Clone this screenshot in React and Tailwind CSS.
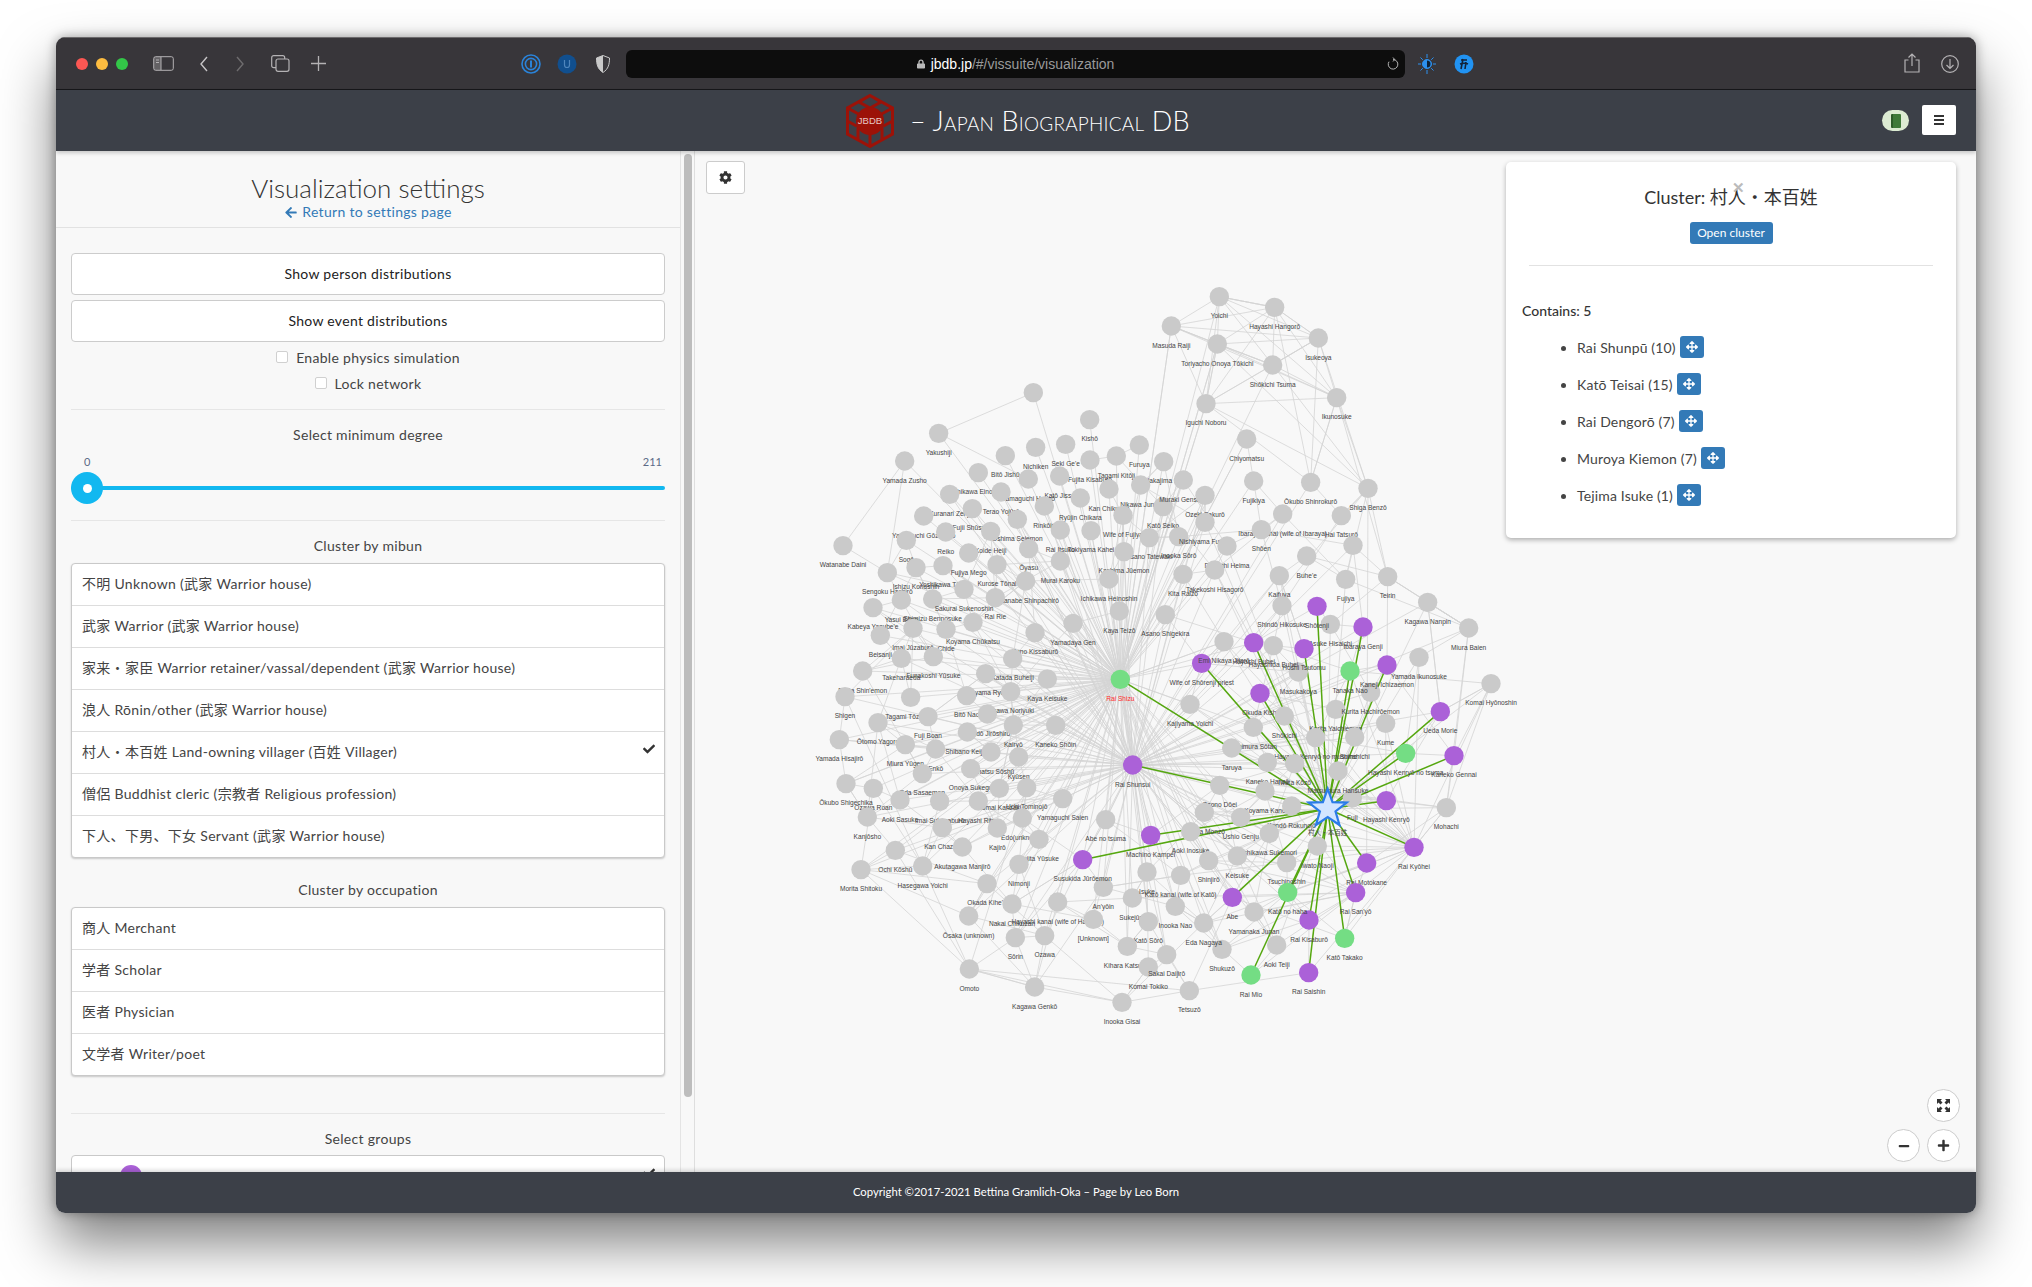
import { FaArrowLeft, FaArrowsAlt, FaCheck, FaCog, FaLock, FaMinus, FaPlus } from 'react-icons/fa'

const SANS = "font-['Lato','Noto_Sans_CJK_JP',sans-serif]"

// graph data, read off the picture in crops of 3x, [x, y, label, kind]
const fromCrop = (ox, oy, list) => list.map(([x, y, label, kind]) => ({ x: ox + x / 3, y: oy + y / 3, label, kind }))

const graphNodes = [
  ...fromCrop(800, 270, [
    [700, 368, ''], [869, 449, 'Kishō'], [416, 490, 'Yakushiji'], [314, 573, 'Yamada Zusho'], [616, 557, 'Bitō Jishū'],
    [707, 532, 'Nichiken'], [797, 523, "Seki Ge'e"], [870, 570, 'Fujita Kisaburō'], [949, 558, 'Tagami Kitōji'], [1018, 525, 'Furuya'],
    [1091, 575, 'Nakajima Eiji'], [535, 608, 'Ishikawa Einoshin'], [685, 627, 'Yamaguchi Hanzō'], [779, 618, 'Katō Jisso'], [603, 666, 'Terao Yojūrō'],
    [927, 657, 'Kan Chikuzan'], [1022, 645, 'Nikawa Junzō'], [449, 673, 'Kuranari Zenji'], [517, 716, 'Fujii Shūsuke'], [733, 708, 'Rinkōin'],
    [841, 684, 'Ryūjin Chikara'], [371, 738, 'Yamaguchi Gōzaburō'], [1089, 710, 'Katō Seiko'], [969, 736, 'Wife of Fujiya'], [652, 748, 'Ōshima Seiemon'],
    [437, 786, 'Reiko'], [572, 784, 'Koide Heiji'], [781, 780, 'Rai Itsuko'], [873, 782, 'Tokiyama Kahei'], [1048, 803, 'Asano Tatewaki'],
    [1136, 800, 'Inooka Sōrō'], [319, 811, 'Sogō'], [686, 836, 'Ōyasu'], [506, 849, 'Fujiya Mego'], [972, 845, 'Kashima Jūemon'],
    [348, 893, 'Ishizu Konoshin'], [429, 887, 'Yoshikawa Tōzō'], [591, 884, 'Kurose Tōnai'], [781, 873, 'Murai Karoku'], [1149, 913, 'Kita Raizō'],
    [262, 908, 'Sengoku Hachirō'], [677, 933, 'Watanabe Shinpachirō'], [927, 927, 'Ichikawa Heinoshin'], [304, 990, 'Yasui Bōan'], [398, 987, 'Shimizu Bennosuke'],
    [492, 958, 'Sakurai Sukenoshin'], [586, 983, 'Rai Rie'], [219, 1013, 'Kabeya Yasube\'e'], [958, 1023, 'Kaya Teizō'], [1096, 1034, 'Asano Shigekira'],
    [339, 1075, 'Imai Jūzaburō'], [438, 1078, 'Chide'], [519, 1057, 'Koyama Chūkatsu'], [819, 1060, 'Yamadaya Gen'], [705, 1088, 'Kuno Kissaburō'],
    [129, 827, 'Watanabe Daini'], [241, 1096, 'Beisanji'],
  ]),
  ...fromCrop(800, 660, [
    [304, -5, 'Takeharaeda'], [400, -10, 'Funakoshi Yūsuke'], [638, -4, 'Katada Buheiji'], [742, 57, 'Kaya Keisuke'], [188, 33, "Fujita Shin'emon"],
    [557, 41, 'Murayama Ryūzō'], [632, 95, 'Ogawa Noriyuki'], [135, 110, 'Shigen'], [332, 112, 'Tagami Tōzaburō'], [500, 107, 'Bitō Nao'],
    [562, 162, 'Kondō Jirōshirō'], [384, 170, 'Fuji Boan'], [234, 188, 'Ōtomo Yagoro'], [640, 195, 'Kairyō'], [502, 216, 'Shibano Keijirō'],
    [767, 196, 'Kaneko Shōin'], [118, 239, 'Yamada Hisajirō'], [316, 254, 'Miura Yūgen'], [407, 267, 'Enkō'], [573, 276, 'Komatsu Sōshū'],
    [656, 291, 'Kyūsen'], [512, 326, 'Onoya Sukego'], [367, 341, 'Eda Sasaemon'], [138, 371, 'Ōkubo Shigechika'], [220, 385, 'Ozawa Roan'],
    [598, 385, 'Komai Kanzaki'], [680, 383, 'Uchi Tominojō'], [300, 420, 'Aoki Sasuke'], [419, 424, 'Imai Sukesaburō'], [535, 423, 'Hayashi Ritsu'],
    [788, 416, 'Yamaguchi Saien'], [202, 471, 'Kanjōsho'], [427, 503, 'Kan Chazan'], [667, 474, 'Edo(unknown)'], [592, 504, 'Kajirō'],
    [487, 561, 'Akutagawa Manjirō'], [717, 538, 'Fujita Yūsuke'], [286, 571, 'Ochi Kōshū'], [368, 618, 'Hasegawa Yoichi'], [657, 613, 'Nimonji'],
    [183, 629, 'Morita Shitoku'], [561, 671, 'Okada Kihe\'e'], [917, 479, 'Abe no tsuma'], [636, 732, 'Nakai Chikuzan'], [773, 726, 'Hayashi kanai (wife of Hayashi)'],
    [506, 768, 'Ōsaka (unknown)'], [880, 778, '[Unknown]'], [646, 833, 'Sōrin'], [734, 827, 'Ozawa'], [508, 927, 'Omoto'],
    [704, 981, 'Kagawa Genkō'], [966, 1027, 'Inooka Gisai'], [910, 682, "An'yōin"], [997, 714, 'Sukejūrō'], [1041, 636, 'Isuke'],
    [1045, 785, 'Katō Sōrō'], [982, 859, 'Kihara Katsuma'], [1045, 921, 'Komai Tokiko'], [1100, 884, 'Sakai Daijirō'],
    [961, 58, 'Rai Shizu', 'g'], [998, 315, 'Rai Shunsui', 'p'], [1052, 526, 'Machino Kampei', 'p'], [848, 599, 'Susukida Jūrōemon', 'p'],
  ]),
  ...fromCrop(1150, 660, [
    [155, 10, 'Wife of Shōrenji priest', 'p'], [330, 100, 'Okuda Kishi', 'p'], [445, 36, 'Masukakoya'], [120, 133, 'Kajiyama Yoichi'], [403, 168, 'Shōkichi'],
    [310, 202, 'Sugimura Sōtan'], [557, 148, 'Kurita Yaichiemon'], [662, 97, 'Kurita Hachirōemon'], [600, 33, 'Tanaka Nao', 'g'], [711, 15, 'Kaneji Ichizaemon', 'p'],
    [807, -8, 'Yamada Ikunosuke'], [707, 190, 'Kume'], [614, 231, 'Shinshichi'], [497, 233, 'Hayashi Kenryō no musume'], [871, 155, 'Ueda Morie', 'p'],
    [1023, 71, 'Komai Hyōnoshin'], [912, 287, 'Kaneko Gennai', 'p'], [767, 280, 'Hayashi Kenryō no tsuma', 'g'], [709, 422, 'Hayashi Kenryō', 'p'], [889, 443, 'Mohachi'],
    [792, 562, 'Rai Kyōhei', 'p'], [650, 609, 'Rai Motokane', 'p'], [617, 698, "Rai San'yō", 'p'], [584, 835, 'Katō Takako', 'g'], [477, 780, 'Rai Kisaburō', 'p'],
    [476, 938, 'Rai Saishin', 'p'], [303, 945, 'Rai Mio', 'g'], [410, 608, 'Tsuchinoshin'], [413, 697, 'Katō no haha', 'g'], [247, 712, 'Abe', 'p'],
    [502, 558, 'Iwato Naoji'], [607, 414, 'Fuji'], [564, 333, 'Matsumura Hansuke'], [434, 311, 'Iwata Kōzō'], [352, 307, 'Kaneko Hanzō'],
    [245, 264, 'Taruya'], [209, 376, 'Osono Dōei'], [345, 393, 'Koyama Kanō'], [425, 438, 'Kondō Rokunojō'], [272, 472, 'Ushio Genju'],
    [163, 457, 'Okada Monzō'], [122, 515, 'Aoki Inosuke'], [358, 520, 'Ishikawa Sukemori'], [262, 588, 'Keisuke'], [176, 602, 'Shinjirō'],
    [92, 646, 'Katō kanai (wife of Katō)'], [312, 756, 'Yamanaka Junan'], [380, 855, 'Aoki Teiji'], [216, 868, 'Shukuzō'], [76, 739, 'Inooka Nao'],
    [161, 789, 'Eda Nagaya'], [118, 992, 'Tetsuzō'],
  ]),
  ...fromCrop(1100, 270, [
    [358, 80, 'Yoichi'], [524, 112, 'Hayashi Hangorō'], [214, 168, 'Masuda Raiji'], [352, 222, 'Toriyacho Onoya Tōkichi'], [655, 204, 'Isukeoya'],
    [518, 285, 'Shōkichi Tsuma'], [710, 383, 'Ikunosuke'], [318, 401, 'Iguchi Noboru'], [440, 507, 'Chiyomatsu'], [461, 633, 'Fujikiya'],
    [632, 637, 'Ōkubo Shinrokurō'], [804, 655, 'Shiga Benzō'], [548, 732, 'Ibaraya kanai (wife of Ibaraya)'], [724, 737, 'Hai Tatsurō'], [484, 779, 'Shōen'],
    [250, 630, 'Muraki Gensuke'], [315, 676, 'Ozeki Sakurō'], [315, 757, 'Nishiyama Fuyuki'], [381, 828, 'Debuchi Heima'], [620, 858, "Buhe'e"],
    [344, 900, 'Takekoshi Hisagorō'], [759, 826, ''], [538, 917, 'Kaifuya'], [737, 928, 'Fujiya'], [863, 920, 'Teirin'],
    [983, 997, 'Kagawa Nanpin'], [1106, 1074, 'Miura Baien'], [546, 1007, 'Shindō Hikosuke'], [691, 1063, 'Asuke Hisaichi'], [651, 1009, 'Shōtenji', 'p'],
    [789, 1071, 'Ibaraya Genji', 'p'], [372, 1115, 'Emi Nikaya Jitarō'], [520, 1127, 'Hayashida Buhei'], [461, 1118, 'Hayashi Buhei', 'p'], [612, 1136, 'Hoshi Tsutomu', 'p'],
  ]),
]

const STAR = { x: 1327.7, y: 808.8 }
const byName = name => graphNodes.find(n => n.label === name)

// small repeatable hash instead of Math.random, so the edges stay put between runs
const pick = (i, j, mod) => ((i * 7919 + j * 104729 + i * j * 31) >>> 0) % mod

function buildEdges() {
  const edges = []
  const shizu = byName('Rai Shizu')
  const shunsui = byName('Rai Shunsui')
  const kyohei = byName('Rai Kyōhei')
  const sanyo = byName("Rai San'yō")
  const add = (a, b) => a && b && edges.push([a, b])
  graphNodes.forEach((n, i) => {
    const outer = n.y > 960 || n.x < 870 && n.y > 880 || n.x < 860 && n.y < 560
    if (!outer && n !== shizu && (n.x < 1260 || pick(i, 1, 3) === 0)) add(shizu, n)
    if (!outer && n !== shunsui && n.y > 480 && pick(i, 2, 5) < 3) add(shunsui, n)
    if (n.x > 1180 && n.y > 520 && !n.kind && pick(i, 3, 5) < 3) edges.push([STAR, n])
    if (n.x > 1170 && n.y > 640 && n.y < 1000 && pick(i, 4, 5) < 2) add(kyohei, n)
    if (n.x > 1130 && n.y > 780 && pick(i, 5, 3) === 0) add(sanyo, n)
    // the upper left of the net only has its lines to the hubs
    if (n.y < 560 && n.x < 1100) return
    const near = graphNodes
      .filter(o => o !== n)
      .sort((a, b) => (a.x - n.x) ** 2 + (a.y - n.y) ** 2 - (b.x - n.x) ** 2 - (b.y - n.y) ** 2)
    add(n, near[pick(i, 6, 3)])
    if (n.y > 500) add(n, near[3 + pick(i, 7, 9)])
  })
  const top = ['Yoichi', 'Hayashi Hangorō', 'Masuda Raiji', 'Toriyacho Onoya Tōkichi', 'Isukeoya', 'Shōkichi Tsuma', 'Ikunosuke', 'Iguchi Noboru']
  top.forEach((a, i) => top.slice(i + 1).forEach(b => add(byName(a), byName(b))))
  const extra = [
    ['Masuda Raiji', 'Rai Shizu'], ['Iguchi Noboru', 'Rai Shizu'], ['Toriyacho Onoya Tōkichi', 'Rai Shizu'], ['Shōkichi Tsuma', 'Rai Shizu'], ['Chiyomatsu', 'Rai Shizu'],
    ['Ikunosuke', 'Shiga Benzō'], ['Ikunosuke', 'Ōkubo Shinrokurō'], ['Isukeoya', 'Shiga Benzō'], ['Isukeoya', 'Ōkubo Shinrokurō'], ['Hayashi Hangorō', 'Ōkubo Shinrokurō'],
    ['Toriyacho Onoya Tōkichi', 'Shiga Benzō'], ['Iguchi Noboru', 'Ōkubo Shinrokurō'], ['Iguchi Noboru', 'Shiga Benzō'], ['Shōkichi Tsuma', 'Shiga Benzō'], ['Ikunosuke', 'Teirin'],
    ['Shiga Benzō', 'Teirin'], ['Shiga Benzō', 'Fujiya'], ['Shiga Benzō', 'Rai Motokane'], ['Teirin', 'Miura Baien'], ['Kagawa Nanpin', 'Miura Baien'], ['Kagawa Nanpin', 'Ueda Morie'],
    ['Miura Baien', 'Kaneko Gennai'], ['Miura Baien', 'Mohachi'], ['Komai Hyōnoshin', 'Kaneko Gennai'], ['Komai Hyōnoshin', 'Ueda Morie'], ['Mohachi', 'Rai Kyōhei'],
    ['Yamada Zusho', 'Watanabe Daini'], ['Yamada Zusho', 'Sengoku Hachirō'], ['Yakushiji', 'Yamaguchi Hanzō'], ['Watanabe Daini', 'Sengoku Hachirō'],
    ['Omoto', 'Inooka Gisai'], ['Omoto', 'Kagawa Genkō'], ['Omoto', 'Tetsuzō'], ['Omoto', 'Sōrin'], ['Omoto', 'Hasegawa Yoichi'], ['Omoto', 'Uchi Tominojō'],
    ['Kagawa Genkō', 'Inooka Gisai'], ['Kagawa Genkō', 'Ozawa'], ['Inooka Gisai', 'Ozawa'], ['Inooka Gisai', 'Tetsuzō'], ['Inooka Gisai', 'Komai Tokiko'],
    ['Morita Shitoku', 'Omoto'], ['Morita Shitoku', 'Ochi Kōshū'], ['Morita Shitoku', 'Ōsaka (unknown)'], ['Shigen', 'Hasegawa Yoichi'], ['Ōsaka (unknown)', 'Ozawa'],
  ]
  extra.forEach(([a, b]) => add(byName(a), byName(b)))
  // the lone node at the top joins Yakushiji
  edges.push([graphNodes[0], byName('Yakushiji')])
  return edges
}

const grayEdges = buildEdges()
const greenEdges = graphNodes.filter(n => n.kind).map(n => [STAR, n])
const starPoints = Array.from({ length: 10 }, (_, i) => {
  const r = i % 2 ? 8.2 : 20
  const a = -Math.PI / 2 + (i * Math.PI) / 5
  return `${(STAR.x + r * Math.cos(a)).toFixed(1)},${(STAR.y + r * Math.sin(a)).toFixed(1)}`
}).join(' ')

const fills = { g: '#74dd84', p: '#ab61d8' }

function NetworkGraph() {
  return (
    <svg viewBox="695 151 1281 1021" className="absolute inset-0 w-full h-full">
      {grayEdges.map(([a, b], i) => (
        <line key={i} x1={a.x} y1={a.y} x2={b.x} y2={b.y} stroke="#d4d4d4" strokeWidth="0.8" />
      ))}
      {greenEdges.map(([a, b], i) => (
        <line key={i} x1={a.x} y1={a.y} x2={b.x} y2={b.y} stroke="#55a70f" strokeWidth="1.5" />
      ))}
      {graphNodes.map((n, i) => (
        <g key={i}>
          <circle cx={n.x} cy={n.y} r="9.7" fill={fills[n.kind] ?? '#cacaca'} />
          {n.label && (
            <text
              x={n.x}
              y={n.y + 21.7}
              textAnchor="middle"
              fontSize="6.6"
              fontFamily="'Liberation Sans', sans-serif"
              fill={n.label === 'Rai Shizu' ? '#ff2a2a' : '#444444'}
            >
              {n.label}
            </text>
          )}
        </g>
      ))}
      <polygon points={starPoints} fill="#d2e5ff" stroke="#2b7ce9" strokeWidth="2.2" strokeLinejoin="miter" />
      <text x={STAR.x} y={835} textAnchor="middle" fontSize="6.6" fontFamily="'Noto Sans CJK JP', sans-serif" fill="#4a4a4a">
        村人・本百姓
      </text>
    </svg>
  )
}

function SafariBar() {
  const stroke = '#b4b2b4'
  return (
    <div className="h-[53px] bg-[#38363a] border-t border-[#6c6a6c] border-b-[#17171a] border-b flex items-center relative shrink-0">
      <div className="flex items-center gap-[8px] ml-[20px]">
        <span className="w-[12px] h-[12px] rounded-full bg-[#fc5753]" />
        <span className="w-[12px] h-[12px] rounded-full bg-[#fdbc40]" />
        <span className="w-[12px] h-[12px] rounded-full bg-[#33c748]" />
      </div>
      <svg width="21" height="15" viewBox="0 0 21 15" fill="none" className="ml-[25px]" stroke={stroke}>
        <rect x="0.7" y="0.7" width="19.6" height="13.6" rx="2" />
        <rect x="1" y="1" width="7" height="13" fill={stroke} fillOpacity="0.35" stroke="none" />
        <path d="M8 1v13M3 4h3M3 6.5h3" />
      </svg>
      <svg width="10" height="16" viewBox="0 0 10 16" fill="none" className="ml-[25px]" stroke="#c6c4c6" strokeWidth="1.4">
        <path d="M8 1 2 8l6 7" />
      </svg>
      <svg width="10" height="16" viewBox="0 0 10 16" fill="none" className="ml-[26px]" stroke="#6e6c6e" strokeWidth="1.4">
        <path d="m2 1 6 7-6 7" />
      </svg>
      <svg width="19" height="17" viewBox="0 0 19 17" fill="none" className="ml-[26px]" stroke={stroke} strokeWidth="1.2">
        <rect x="0.7" y="0.7" width="13" height="12" rx="2" />
        <rect x="5" y="4" width="13" height="12.3" rx="2" fill="#38363a" />
      </svg>
      <svg width="15" height="15" viewBox="0 0 15 15" fill="none" className="ml-[21px]" stroke={stroke} strokeWidth="1.3">
        <path d="M7.5 0v15M0 7.5h15" />
      </svg>

      <svg width="20" height="20" viewBox="0 0 20 20" fill="none" className="ml-[195px]" stroke="#2a83d9">
        <circle cx="10" cy="10" r="9" strokeWidth="1.6" />
        <circle cx="10" cy="10" r="5.6" strokeWidth="1.6" />
        <path d="M10 6.5v7" strokeWidth="2" />
      </svg>
      <svg width="20" height="20" viewBox="0 0 20 20" className="ml-[16px]">
        <circle cx="10" cy="10" r="9.5" fill="#114f8e" />
        <path d="M7.5 6v5a2.5 2.5 0 0 0 5 0V6" fill="none" stroke="#4f86bd" strokeWidth="1.2" />
      </svg>
      <svg width="14" height="18" viewBox="0 0 14 18" className="ml-[19px]">
        <path d="M7 .5 13.5 3c0 6-1 11-6.500 14.500C1.500 14 .5 9 .5 3z" fill="#3b393d" stroke="#c9c9c9" />
        <path d="M7 .5V17.500C1.500 14 .5 9 .5 3z" fill="#c9c9c9" />
      </svg>

      <div className="ml-[16px] w-[779px] h-[28px] rounded-[6px] bg-[#0d0d0d] flex items-center justify-center relative">
        <FaLock className="text-[#b9b9b9] w-[8px] h-[10px] mr-[6px]" />
        <span className="font-['Liberation_Sans',sans-serif] text-[14px] text-[#9a9a9a] mt-[1px]">
          <span className="text-white">jbdb.jp</span>/#/vissuite/visualization
        </span>
        <svg width="12" height="14" viewBox="0 0 12 14" fill="none" stroke="#b5b5b5" className="absolute right-[6px]">
          <path d="M6 2.500a4.800 4.800 0 1 1-4 2.200M6 .5 7.700 2.500 6 4.500" />
        </svg>
      </div>

      <svg width="18" height="20" viewBox="0 0 18 20" className="ml-[13px]" fill="none" stroke="#2c90ee">
        <circle cx="9" cy="10" r="4.500" fill="#2c90ee" />
        <path d="M9 0v4M9 16v4M0 10h3M15 10h3M2.500 3.500l2.300 2.300M13.200 14.200l2.300 2.300M15.500 3.500l-2.300 2.300M4.800 14.200l-2.300 2.300" />
        <path d="M9 6.500a3.500 3.500 0 0 1 0 7z" fill="#0d2238" stroke="none" />
      </svg>
      <svg width="20" height="20" viewBox="0 0 20 20" className="ml-[18px]">
        <circle cx="10" cy="10" r="9.500" fill="#2193f2" />
        <path d="M7 6h6M6 10c3-1 6-1 8 0M9 5l-2 10M12 8l-1 7" stroke="#12233a" strokeWidth="1.6" fill="none" />
      </svg>

      <svg width="16" height="20" viewBox="0 0 16 20" fill="none" stroke={stroke} strokeWidth="1.2" className="absolute left-[1848px] top-[15px]">
        <path d="M4.500 7H1v12h14V7h-3.500M8 13V1M4.500 4.500 8 1l3.500 3.500" />
      </svg>
      <svg width="18" height="18" viewBox="0 0 18 18" fill="none" stroke={stroke} strokeWidth="1.2" className="absolute left-[1885px] top-[17px]">
        <circle cx="9" cy="9" r="8.300" />
        <path d="M9 4v9M5.500 10 9 13.500 12.500 10" />
      </svg>
    </div>
  )
}

function Logo() {
  return (
    <svg width="48" height="54" viewBox="0 0 48 54" className="shrink-0" fill="none" stroke="#9c1208" strokeWidth="3">
      <path d="M24 1.500 46.500 14v26L24 52.500 1.500 40V14zM24 1.500 35 8 24 14 13 8zM13 8v0M1.500 14l11 6M46.500 14l-11 6M24 38v14M12 32 12 46M36 32 36 46M1.500 27l9 5M46.500 27l-9 5" />
      <circle cx="24" cy="27" r="14" fill="#9c1208" stroke="none" />
      <text x="24" y="30" textAnchor="middle" fontSize="9.500" fill="#e8c9c6" stroke="none" fontFamily="'Liberation Sans', sans-serif">
        JBDB
      </text>
    </svg>
  )
}

function AppHeader() {
  return (
    <header className="h-[61px] bg-[#3c4048] flex items-center relative shrink-0 shadow-[0_2px_4px_rgba(0,0,0,0.2)] z-10">
      <div className="ml-[790px]">
        <Logo />
      </div>
      <h1 className={`${SANS} ml-[16px] text-[27px] font-light text-white [font-variant:small-caps] tracking-[0.2px] leading-none`}>
        – Japan Biographical DB
      </h1>
      <div className="absolute left-[1826px] top-[20px] w-[27px] h-[21px] rounded-full bg-[#dcebd2] flex items-center justify-center">
        <span className="w-[10px] h-[14px] bg-[#3f7a39] rounded-[1px] border-l-2 border-[#2e5c2a]" />
      </div>
      <button className="absolute left-[1866px] top-[15px] w-[34px] h-[30px] bg-white rounded-[2px] flex flex-col items-center justify-center gap-[2px]">
        <span className="w-[10px] h-[2px] bg-[#333]" />
        <span className="w-[10px] h-[2px] bg-[#333]" />
        <span className="w-[10px] h-[2px] bg-[#333]" />
      </button>
    </header>
  )
}

function ListGroup({ rows }) {
  return (
    <div className="mt-[7px] bg-white border border-[#c9c9c9] rounded-[4px] shadow-[0_1px_2px_rgba(0,0,0,0.2)]">
      {rows.map((row, i) => (
        <div
          key={row.text}
          className={`px-[10px] pb-[3px] text-[14px] text-[#444] flex items-center justify-between ${i < rows.length - 1 ? 'h-[42px] border-b border-[#ddd]' : 'h-[41px]'}`}
        >
          <span>{row.text}</span>
          {row.checked && <FaCheck className="text-[#333] w-[12px] h-[12px] -mt-[4px] -mr-[1px]" />}
        </div>
      ))}
    </div>
  )
}

const mibunRows = [
  { text: '不明 Unknown (武家 Warrior house)' },
  { text: '武家 Warrior (武家 Warrior house)' },
  { text: '家来・家臣 Warrior retainer/vassal/dependent (武家 Warrior house)' },
  { text: '浪人 Rōnin/other (武家 Warrior house)' },
  { text: '村人・本百姓 Land-owning villager (百姓 Villager)', checked: true },
  { text: '僧侶 Buddhist cleric (宗教者 Religious profession)' },
  { text: '下人、下男、下女 Servant (武家 Warrior house)' },
]

const occupationRows = [
  { text: '商人 Merchant' },
  { text: '学者 Scholar' },
  { text: '医者 Physician' },
  { text: '文学者 Writer/poet' },
]

function Check({ label }) {
  return (
    <label className="h-[26px] pb-[2px] flex items-center justify-center gap-[8px] text-[14px] text-[#444]">
      <span className="w-[12px] h-[12px] bg-white border border-[#d0d0d0] rounded-[2px]" />
      {label}
    </label>
  )
}

function SettingsPanel() {
  const heading = 'text-center text-[14px] leading-[20px] text-[#444]'
  return (
    <aside className={`${SANS} w-[625px] shrink-0 bg-[#f8f8f8] border-r border-[#e4e4e4] overflow-hidden tracking-[0.3px]`}>
      <div className="pt-[22px] pb-[6px] border-b border-[#e2e2e2] text-center">
        <h2 className="text-[26px] leading-[30px] font-light text-[#333] tracking-normal">Visualization settings</h2>
        <a className="text-[14px] leading-[18px] text-[#337ab7] flex items-center justify-center gap-[4px]">
          <FaArrowLeft className="w-[14px] h-[13px]" /> Return to settings page
        </a>
      </div>
      <div className="px-[15px]">
        <button className="mt-[25px] pb-[2px] w-full h-[42px] bg-white border border-[#ccc] rounded-[4px] text-[14px] text-[#222]">
          Show person distributions
        </button>
        <button className="mt-[5px] pb-[2px] w-full h-[42px] bg-white border border-[#ccc] rounded-[4px] text-[14px] text-[#222]">
          Show event distributions
        </button>
        <div className="mt-[3px]">
          <Check label="Enable physics simulation" />
          <Check label="Lock network" />
        </div>
        <div className="mt-[12px] border-t border-[#e6e6e6]" />
        <p className={`mt-[15px] ${heading}`}>Select minimum degree</p>
        <div className="mt-[10px] flex justify-between text-[11px] leading-[14px] text-[#5b6a86] pl-[13px] pr-[3px] tracking-normal">
          <span>0</span>
          <span>211</span>
        </div>
        <div className="mt-[3px] h-[32px] flex items-center relative">
          <div className="w-full h-[4px] bg-[#12b8f0] rounded-full" />
          <div className="absolute left-0 top-0 w-[32px] h-[32px] rounded-full bg-[#12b8f0] flex items-center justify-center">
            <span className="w-[9px] h-[9px] rounded-full bg-white" />
          </div>
        </div>
        <div className="mt-[16px] border-t border-[#e6e6e6]" />
        <p className={`mt-[15px] ${heading}`}>Cluster by mibun</p>
        <ListGroup rows={mibunRows} />
        <p className={`mt-[22px] ${heading}`}>Cluster by occupation</p>
        <ListGroup rows={occupationRows} />
        <div className="mt-[37px] border-t border-[#e6e6e6]" />
        <p className={`mt-[15px] ${heading}`}>Select groups</p>
        <div className="mt-[6px] bg-white border border-[#c9c9c9] rounded-[4px] h-[42px] px-[10px] text-[14px] text-[#444] flex items-center justify-between relative">
          <span>Rai</span>
          <span className="absolute left-[48px] top-[9px] w-[22px] h-[22px] rounded-full bg-[#ab61d8]" />
          <FaCheck className="text-[#333] w-[12px] h-[12px] -mt-[6px] -mr-[1px]" />
        </div>
      </div>
    </aside>
  )
}

function ScrollGutter() {
  return (
    <div className="w-[14px] shrink-0 bg-[#f8f8f8] border-r border-[#dedede] pt-[3px] pl-[3px]">
      <div className="w-[8px] h-[943px] bg-[#bdbdbd] rounded-full" />
    </div>
  )
}

function ClusterCard() {
  const members = ['Rai Shunpū (10)', 'Katō Teisai (15)', 'Rai Dengorō (7)', 'Muroya Kiemon (7)', 'Tejima Isuke (1)']
  return (
    <div className={`${SANS} absolute left-[811px] top-[11px] w-[450px] h-[376px] bg-white rounded-[5px] shadow-[0_2px_5px_rgba(0,0,0,0.3)]`}>
      <h3 className="mt-[23px] text-center text-[18px] leading-[24px] text-[#333]">Cluster: 村人・本百姓</h3>
      <span className="absolute left-[226px] top-[18px] text-[15px] font-bold text-[#bbb] leading-none">✕</span>
      <div className="mt-[13px] flex justify-center">
        <button className="w-[83px] h-[22px] bg-[#337ab7] rounded-[3px] text-[12px] text-white">Open cluster</button>
      </div>
      <div className="mt-[21px] mx-[23px] border-t border-[#e2e2e2]" />
      <p className="mt-[35px] ml-[16px] text-[14px] leading-[20px] font-medium text-[#333]">Contains: 5</p>
      <ul className="mt-[15px] ml-[55px] list-disc text-[14px] text-[#444] tracking-[0.15px]">
        {members.map(name => (
          <li key={name} className="h-[37px] ml-[16px]">
            <span className="inline-flex items-center gap-[4px] h-[22px]">
              {name}
              <span className="w-[24px] h-[22px] bg-[#337ab7] rounded-[3px] flex items-center justify-center">
                <FaArrowsAlt className="text-white w-[12px] h-[12px]" />
              </span>
            </span>
          </li>
        ))}
      </ul>
    </div>
  )
}

function ZoomButton({ className, children }) {
  return (
    <button className={`absolute w-[33px] h-[33px] bg-white border border-[#ccc] rounded-full flex items-center justify-center text-[#333] ${className}`}>
      {children}
    </button>
  )
}

function GraphArea() {
  return (
    <main className="flex-1 bg-[#f8f8f8] relative overflow-hidden">
      <NetworkGraph />
      <button className="absolute left-[11px] top-[10px] w-[39px] h-[33px] bg-white border border-[#ccc] rounded-[3px] flex items-center justify-center">
        <FaCog className="text-[#333] w-[13px] h-[13px]" />
      </button>
      <ClusterCard />
      <ZoomButton className="left-[1232px] top-[938px]">
        <svg width="15" height="15" viewBox="0 0 15 15" fill="#333">
          <path d="M1 1h5L4.500 2.500 6.500 4.500 4.500 6.500 2.500 4.500 1 6zM14 1v5L12.500 4.500 10.500 6.500 8.500 4.500 10.500 2.500 9 1zM1 14V9l1.500 1.500 2-2 2 2-2 2L6 14zM14 14H9l1.500-1.500-2-2 2-2 2 2L14 9z" />
        </svg>
      </ZoomButton>
      <ZoomButton className="left-[1192px] top-[978px]">
        <FaMinus className="w-[12px] h-[12px]" />
      </ZoomButton>
      <ZoomButton className="left-[1232px] top-[978px]">
        <FaPlus className="w-[13px] h-[13px]" />
      </ZoomButton>
    </main>
  )
}

export default function App() {
  return (
    <div className="w-[2032px] h-[1287px] bg-white overflow-hidden pt-[37px] pl-[56px]">
      <div className="w-[1920px] h-[1176px] rounded-[9px] overflow-hidden flex flex-col shadow-[0_30px_55px_rgba(0,0,0,0.5),0_0_12px_rgba(0,0,0,0.35)]">
        <SafariBar />
        <AppHeader />
        <div className="flex-1 flex min-h-0">
          <SettingsPanel />
          <ScrollGutter />
          <GraphArea />
        </div>
        <footer className={`${SANS} h-[41px] bg-[#3c4048] shrink-0 flex items-center justify-center text-[11.300px] text-white shadow-[0_-2px_4px_rgba(0,0,0,0.15)] z-10`}>
          Copyright ©2017-2021 Bettina Gramlich-Oka – Page by Leo Born
        </footer>
      </div>
    </div>
  )
}
